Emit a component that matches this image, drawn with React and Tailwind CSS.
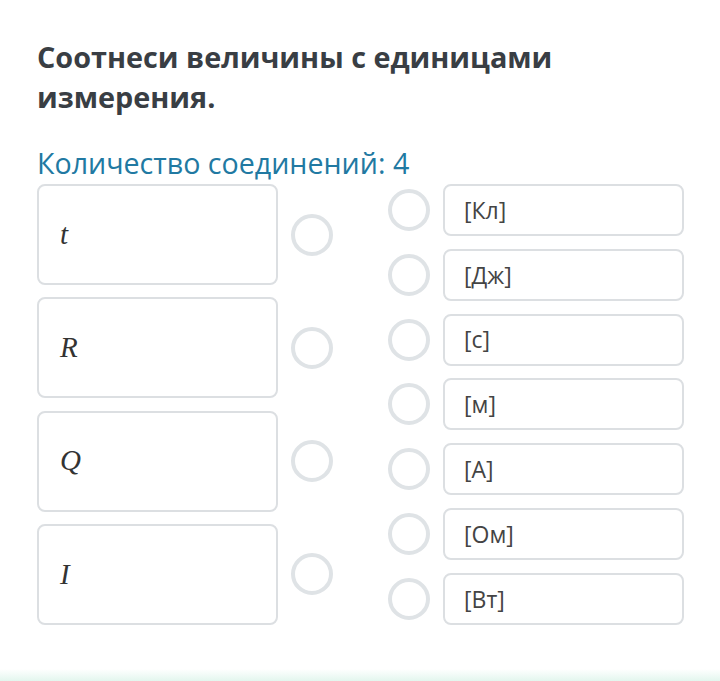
const leftItems = ["t", "R", "Q", "I"];
const rightItems = ["[Кл]", "[Дж]", "[с]", "[м]", "[А]", "[Ом]", "[Вт]"];

const Circle = () => (
  <div className="w-[42px] h-[42px] shrink-0 rounded-full border-4 border-[#dfe3e6] bg-white" />
);

const App = () => {
  return (
    <div
      className="w-[720px] h-[681px] bg-white flex flex-col overflow-hidden"
      style={{ fontFamily: '"Open Sans", sans-serif' }}
    >
      <div className="flex-1 pl-[37px] pr-[30px] pt-[37px]">
        <h1 className="text-[28.8px] leading-[40px] font-bold text-[#393e44] w-[600px]">
          Соотнеси величины с единицами измерения.
        </h1>
        <p className="mt-[28px] text-[28.6px] leading-[36px] text-[#2179a2]">
          Количество соединений: 4
        </p>
        <div className="mt-[3px] flex">
          <div className="flex flex-col justify-between h-[441px]">
            {leftItems.map((item) => (
              <div key={item} className="flex items-center">
                <div className="w-[241px] h-[101px] rounded-lg border-2 border-[#dcdfe2] flex items-center pl-[21px]">
                  <span
                    className="italic text-[29px] text-[#333]"
                    style={{ fontFamily: '"Liberation Serif", "DejaVu Serif", serif' }}
                  >
                    {item}
                  </span>
                </div>
                <div className="ml-[13px]">
                  <Circle />
                </div>
              </div>
            ))}
          </div>
          <div className="ml-[55px] flex flex-col justify-between h-[441px]">
            {rightItems.map((item) => (
              <div key={item} className="flex items-center">
                <Circle />
                <div className="ml-[13px] w-[241px] h-[52px] rounded-lg border-2 border-[#dcdfe2] flex items-center pl-[19px]">
                  <span className="text-[23px] text-[#444]">{item}</span>
                </div>
              </div>
            ))}
          </div>
        </div>
      </div>
      <div className="h-[12px] bg-gradient-to-b from-white to-[#e3f6ee]" />
    </div>
  );
};

export default App;
